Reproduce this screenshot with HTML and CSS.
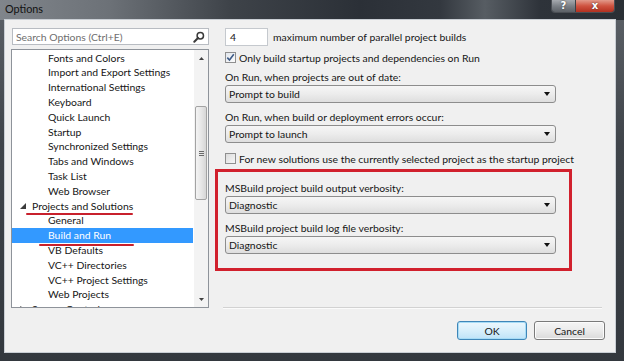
FILE: index.html
```html
<!DOCTYPE html>
<html>
<head>
<meta charset="utf-8">
<title>Options</title>
<link rel="stylesheet" href="styles.css">
</head>
<body>
<div class="window">
  <div class="titlebar">
    <span class="title">Options</span>
    <div class="caption-buttons">
      <span class="cap-btn cap-help">?</span>
      <span class="cap-btn cap-close">x</span>
    </div>
  </div>
  <div class="client">
    <div class="pane-left">
      <div class="search">
        <span class="search-text">Search Options (Ctrl+E)</span>
        <svg class="search-icon" width="12" height="12" viewBox="0 0 12 12"><circle cx="7.3" cy="4.7" r="3.2" fill="none" stroke="#3a3a3a" stroke-width="1.5"/><line x1="5" y1="7" x2="1.3" y2="10.7" stroke="#3a3a3a" stroke-width="2" stroke-linecap="round"/></svg>
      </div>
      <div class="listbox">
        <div class="tree">
          <div class="row child">Fonts and Colors</div>
          <div class="row child">Import and Export Settings</div>
          <div class="row child">International Settings</div>
          <div class="row child">Keyboard</div>
          <div class="row child">Quick Launch</div>
          <div class="row child">Startup</div>
          <div class="row child">Synchronized Settings</div>
          <div class="row child">Tabs and Windows</div>
          <div class="row child">Task List</div>
          <div class="row child">Web Browser</div>
          <div class="row parent marked-parent"><svg class="expander" width="6" height="6" viewBox="0 0 6 6"><polygon points="6,0 6,6 0,6" fill="#3c3c3c"/></svg>Projects and Solutions</div>
          <div class="row child">General</div>
          <div class="row child selected marked-child">Build and Run</div>
          <div class="row child">VB Defaults</div>
          <div class="row child">VC++ Directories</div>
          <div class="row child">VC++ Project Settings</div>
          <div class="row child">Web Projects</div>
          <div class="row parent"><svg class="expander" width="6" height="8" viewBox="0 0 6 8"><polygon points="0.5,0.5 5.5,4 0.5,7.5" fill="none" stroke="#6a6a6a" stroke-width="1"/></svg>Source Control</div>
        </div>
        <div class="scrollbar">
          <div class="sb-btn"><svg width="5" height="3" viewBox="0 0 5 3"><polygon points="2.5,0 5,3 0,3" fill="#404040"/></svg></div>
          <div class="sb-track">
            <div class="sb-thumb"><span class="grip"></span></div>
          </div>
          <div class="sb-btn"><svg width="5" height="3" viewBox="0 0 5 3"><polygon points="0,0 5,0 2.5,3" fill="#404040"/></svg></div>
        </div>
      </div>
    </div>
    <div class="pane-right">
      <div class="line first-line">
        <span class="numbox">4</span>
        <span class="label">maximum number of parallel project builds</span>
      </div>
      <div class="line check-line">
        <span class="checkbox checked"><svg width="9" height="9" viewBox="0 0 9 9"><path d="M1.3 4.6 L3.5 7 L7.8 1.3" fill="none" stroke="#3d5a86" stroke-width="1.6"/></svg></span>
        <span class="label">Only build startup projects and dependencies on Run</span>
      </div>
      <div class="caption cap-a">On Run, when projects are out of date:</div>
      <div class="combo"><span>Prompt to build</span><span class="arrow"></span></div>
      <div class="caption cap-b">On Run, when build or deployment errors occur:</div>
      <div class="combo"><span>Prompt to launch</span><span class="arrow"></span></div>
      <div class="line check-line2">
        <span class="checkbox"></span>
        <span class="label">For new solutions use the currently selected project as the startup project</span>
      </div>
      <div class="highlight">
        <div class="caption cap-c">MSBuild project build output verbosity:</div>
        <div class="combo"><span>Diagnostic</span><span class="arrow"></span></div>
        <div class="caption cap-d">MSBuild project build log file verbosity:</div>
        <div class="combo"><span>Diagnostic</span><span class="arrow"></span></div>
      </div>
      <div class="separator"></div>
    </div>
    <div class="footer">
      <span class="button default">OK</span>
      <span class="button">Cancel</span>
    </div>
  </div>
</div>
</body>
</html>
```
FILE: styles.css
```css
html, body {
  margin: 0;
  padding: 0;
}
body {
  width: 624px;
  height: 361px;
  overflow: hidden;
  font-family: Lato, "Noto Sans", sans-serif;
  font-size: 10.4px;
  color: #161616;
}
.window {
  width: 624px;
  height: 361px;
  display: flex;
  flex-direction: column;
  background:
    linear-gradient(90deg, #80858b 0, #6c7177 110px, #3e4349 230px, #2b3037 360px, #33383f 440px, #575d63 485px, #2e333a 540px, #2a2f35 100%) top / 100% 20px no-repeat,
    linear-gradient(#5d6268, #3f444a 40%, #33383e);
  box-sizing: border-box;
}
.titlebar {
  height: 20px;
  flex: none;
  display: flex;
  align-items: flex-start;
  padding: 0 9px 0 5px;
}
.title {
  font-size: 10.8px;
  line-height: 18px;
  color: #111;
}
.caption-buttons {
  margin-left: auto;
  display: flex;
  height: 13px;
  border: 1px solid #4b4f55;
  border-top: none;
  border-radius: 0 0 4px 4px;
  overflow: hidden;
  box-sizing: border-box;
}
.cap-btn {
  display: flex;
  align-items: center;
  justify-content: center;
  color: #fff;
  font-family: "DejaVu Sans", sans-serif;
  font-weight: bold;
  font-size: 10px;
  line-height: 12px;
  text-shadow: 0 0 2px #333;
}
.cap-help {
  width: 23px;
  background: linear-gradient(#a6aaaf, #7b8086 50%, #5c6167);
  border-right: 1px solid #3d4146;
}
.cap-close {
  width: 38px;
  background: linear-gradient(#e29a8b, #cf5340 50%, #b3301f);
}
.client {
  flex: 1;
  margin: 0 9px 9px 5px;
  background: #f0f0f0;
  display: grid;
  grid-template-columns: 198px 1fr;
  grid-template-rows: 280px auto;
  column-gap: 6px;
  padding: 8px 0 0 6px;
  box-sizing: border-box;
  box-shadow: 0 0 0 1px #c9ced4;
}
.pane-left {
  display: flex;
  flex-direction: column;
  gap: 4px;
}
.search {
  height: 17px;
  margin-left: 1px;
  background: #fff;
  border: 1px solid #b8bcc2;
  box-sizing: border-box;
  display: flex;
  align-items: center;
  padding: 0 3px 0 3px;
}
.search-text {
  color: #6e6e6e;
  flex: 1;
}
.search-icon {
  flex: none;
}
.listbox {
  height: 259px;
  background: #fff;
  border: 1px solid #8e939a;
  box-sizing: border-box;
  display: flex;
  overflow: hidden;
}
.tree {
  flex: 1;
  padding-top: 0.6px;
}
.row {
  height: 14.8px;
  line-height: 14.8px;
  white-space: nowrap;
  position: relative;
}
.child {
  padding-left: 36px;
  margin-right: 1px;
}
.parent {
  padding-left: 8px;
  display: flex;
  align-items: center;
}
.expander {
  margin-right: 6px;
  flex: none;
}
.selected {
  background: #3399ff;
  color: #fff;
}
.marked-parent::after,
.marked-child::after {
  content: "";
  position: absolute;
  height: 2px;
  background: #c8202c;
  border-radius: 1px;
}
.marked-parent::after {
  left: 14px;
  width: 107px;
  top: 14px;
}
.marked-child::after {
  left: 27px;
  width: 95px;
  top: 15.5px;
}
.scrollbar {
  width: 14px;
  flex: none;
  display: flex;
  flex-direction: column;
  background: #f3f3f3;
}
.sb-btn {
  height: 16px;
  display: flex;
  align-items: center;
  justify-content: center;
}
.sb-track {
  flex: 1;
  padding-top: 40px;
}
.sb-thumb {
  margin-left: 1px;
  width: 12px;
  height: 94px;
  box-sizing: border-box;
  border: 1px solid #a3a3a3;
  border-radius: 2px;
  background: linear-gradient(90deg, #f4f4f4, #e4e4e4 60%, #d6d6d6);
  display: flex;
  align-items: center;
  justify-content: center;
}
.grip {
  width: 5px;
  height: 5px;
  background: repeating-linear-gradient(#6a6a6a 0 1px, transparent 1px 2px);
}
.pane-right {
  display: flex;
  flex-direction: column;
  padding-left: 10px;
}
.line {
  display: flex;
  align-items: center;
  white-space: nowrap;
}
.first-line {
  height: 18px;
}
.numbox {
  width: 43px;
  height: 18px;
  box-sizing: border-box;
  background: #fff;
  border: 1px solid #c5c9ce;
  padding-left: 4px;
  line-height: 16px;
  margin-right: 5px;
}
.check-line {
  height: 13px;
  margin-top: 5px;
}
.check-line2 {
  height: 13px;
  margin-top: 9px;
}
.checkbox {
  width: 11px;
  height: 11px;
  box-sizing: border-box;
  border: 1px solid #8f8f8f;
  background: linear-gradient(135deg, #dcdcdc, #f6f6f6);
  margin-right: 3px;
  display: flex;
  align-items: center;
  justify-content: center;
  flex: none;
}
.checkbox.checked {
  background: linear-gradient(135deg, #e2e7ee, #fbfbfb);
}
.caption {
  height: 14px;
  line-height: 14px;
  white-space: nowrap;
}
.cap-a {
  margin-top: 6px;
}
.cap-b {
  margin-top: 7px;
}
.combo {
  width: 331px;
  height: 18px;
  margin-top: 1px;
  box-sizing: border-box;
  border: 1px solid #8d8d8d;
  border-radius: 3px;
  background: linear-gradient(#f6f6f6, #ececec 50%, #dedede);
  display: flex;
  align-items: center;
  justify-content: space-between;
  padding: 0 5px 0 3px;
}
.arrow {
  width: 0;
  height: 0;
  border-left: 3.5px solid transparent;
  border-right: 3.5px solid transparent;
  border-top: 4px solid #111;
}
.highlight {
  margin-left: -10px;
  margin-top: 4px;
  width: 357px;
  height: 102px;
  box-sizing: border-box;
  border: 3px solid #d1202d;
  padding: 9px 0 0 7px;
}
.cap-d {
  margin-top: 7px;
}
.separator {
  margin-top: auto;
  margin-left: -2px;
  margin-right: 13px;
  height: 2px;
  box-sizing: border-box;
  border-top: 1px solid #d2d2d2;
  border-bottom: 1px solid #fbfbfb;
  margin-bottom: -1px;
}
.footer {
  grid-column: 1 / -1;
  display: flex;
  justify-content: flex-end;
  gap: 7px;
  padding-right: 10px;
  margin-top: 13px;
}
.button {
  width: 71px;
  height: 19px;
  box-sizing: border-box;
  border: 1px solid #7a7a7a;
  border-radius: 3px;
  background: linear-gradient(#f5f5f5, #ebebeb 50%, #dadada);
  display: flex;
  align-items: center;
  justify-content: center;
  box-shadow: inset 0 0 0 1px #fcfcfc;
}
.button.default {
  width: 70px;
  border-color: #3f86b8;
  background: linear-gradient(#edf7fd, #d8effb 50%, #bfe3f8);
  box-shadow: inset 0 0 0 1px #a7dcf6;
}
```
